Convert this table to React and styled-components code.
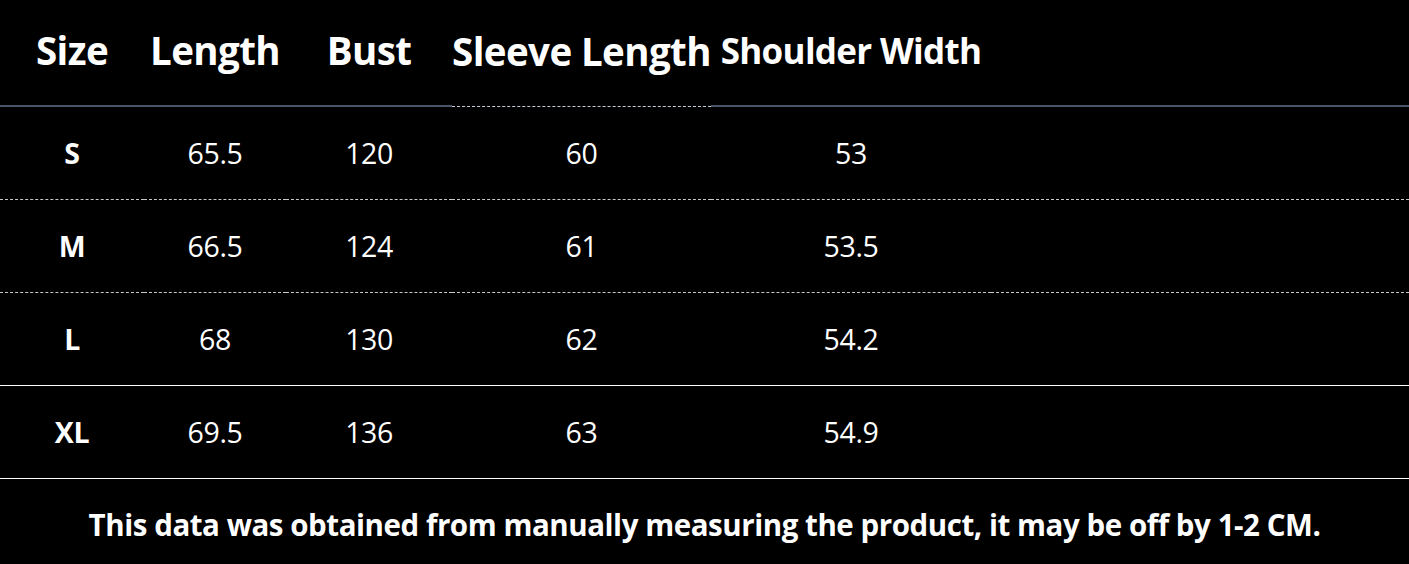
import React from 'react'
import styled, { createGlobalStyle } from 'styled-components'

const GlobalStyle = createGlobalStyle`
  html, body {
    margin: 0;
    padding: 0;
    background: #000;
  }
  body {
    font-family: "Open Sans", "Noto Sans", sans-serif;
    color: #fff;
  }
`

const Wrapper = styled.div`
  width: 1409px;
  height: 564px;
  background: #000;
  overflow: hidden;
`

const Grid = styled.div`
  display: grid;
  grid-template-columns: 144px 142px 166px 259px 280px 1fr;
`

const HeadCell = styled.div`
  height: 107px;
  box-sizing: border-box;
  display: flex;
  align-items: center;
  justify-content: center;
  padding-bottom: 5px;
  font-weight: 700;
  font-size: ${p => (p.small ? '35px' : '38.5px')};
  letter-spacing: ${p => (p.small ? '-0.7px' : '-0.6px')};
  white-space: nowrap;
  border-bottom: ${p => (p.dashed ? '1px dashed #c4ccd8' : '2px solid #4a5568')};
`

const Cell = styled.div`
  height: 93px;
  box-sizing: border-box;
  display: flex;
  align-items: center;
  justify-content: center;
  font-size: 28.5px;
  font-weight: ${p => (p.bold ? 700 : 400)};
  letter-spacing: -0.4px;
  border-bottom: 1px ${p => (p.line === 'dashed' ? 'dashed #c8c8c8' : 'solid #ffffff')};
`

const Note = styled.p`
  margin: 0;
  height: 85px;
  box-sizing: border-box;
  padding-top: 6px;
  display: flex;
  align-items: center;
  justify-content: center;
  font-size: 29.5px;
  font-weight: 700;
  letter-spacing: -0.45px;
`

const heads = ['Size', 'Length', 'Bust', 'Sleeve Length', 'Shoulder Width', '']

const rows = [
  ['S', '65.5', '120', '60', '53', 'dashed'],
  ['M', '66.5', '124', '61', '53.5', 'dashed'],
  ['L', '68', '130', '62', '54.2', 'solid'],
  ['XL', '69.5', '136', '63', '54.9', 'solid'],
]

export default function App() {
  return (
    <Wrapper>
      <GlobalStyle />
      <Grid>
        {heads.map((h, i) => (
          <HeadCell key={i} dashed={i === 3} small={i === 4}>{h}</HeadCell>
        ))}
        {rows.map(r => (
          <React.Fragment key={r[0]}>
            {r.slice(0, 5).map((v, i) => (
              <Cell key={i} bold={i === 0} line={r[5]}>{v}</Cell>
            ))}
            <Cell line={r[5]} />
          </React.Fragment>
        ))}
      </Grid>
      <Note>This data was obtained from manually measuring the product, it may be off by 1-2 CM.</Note>
    </Wrapper>
  )
}
